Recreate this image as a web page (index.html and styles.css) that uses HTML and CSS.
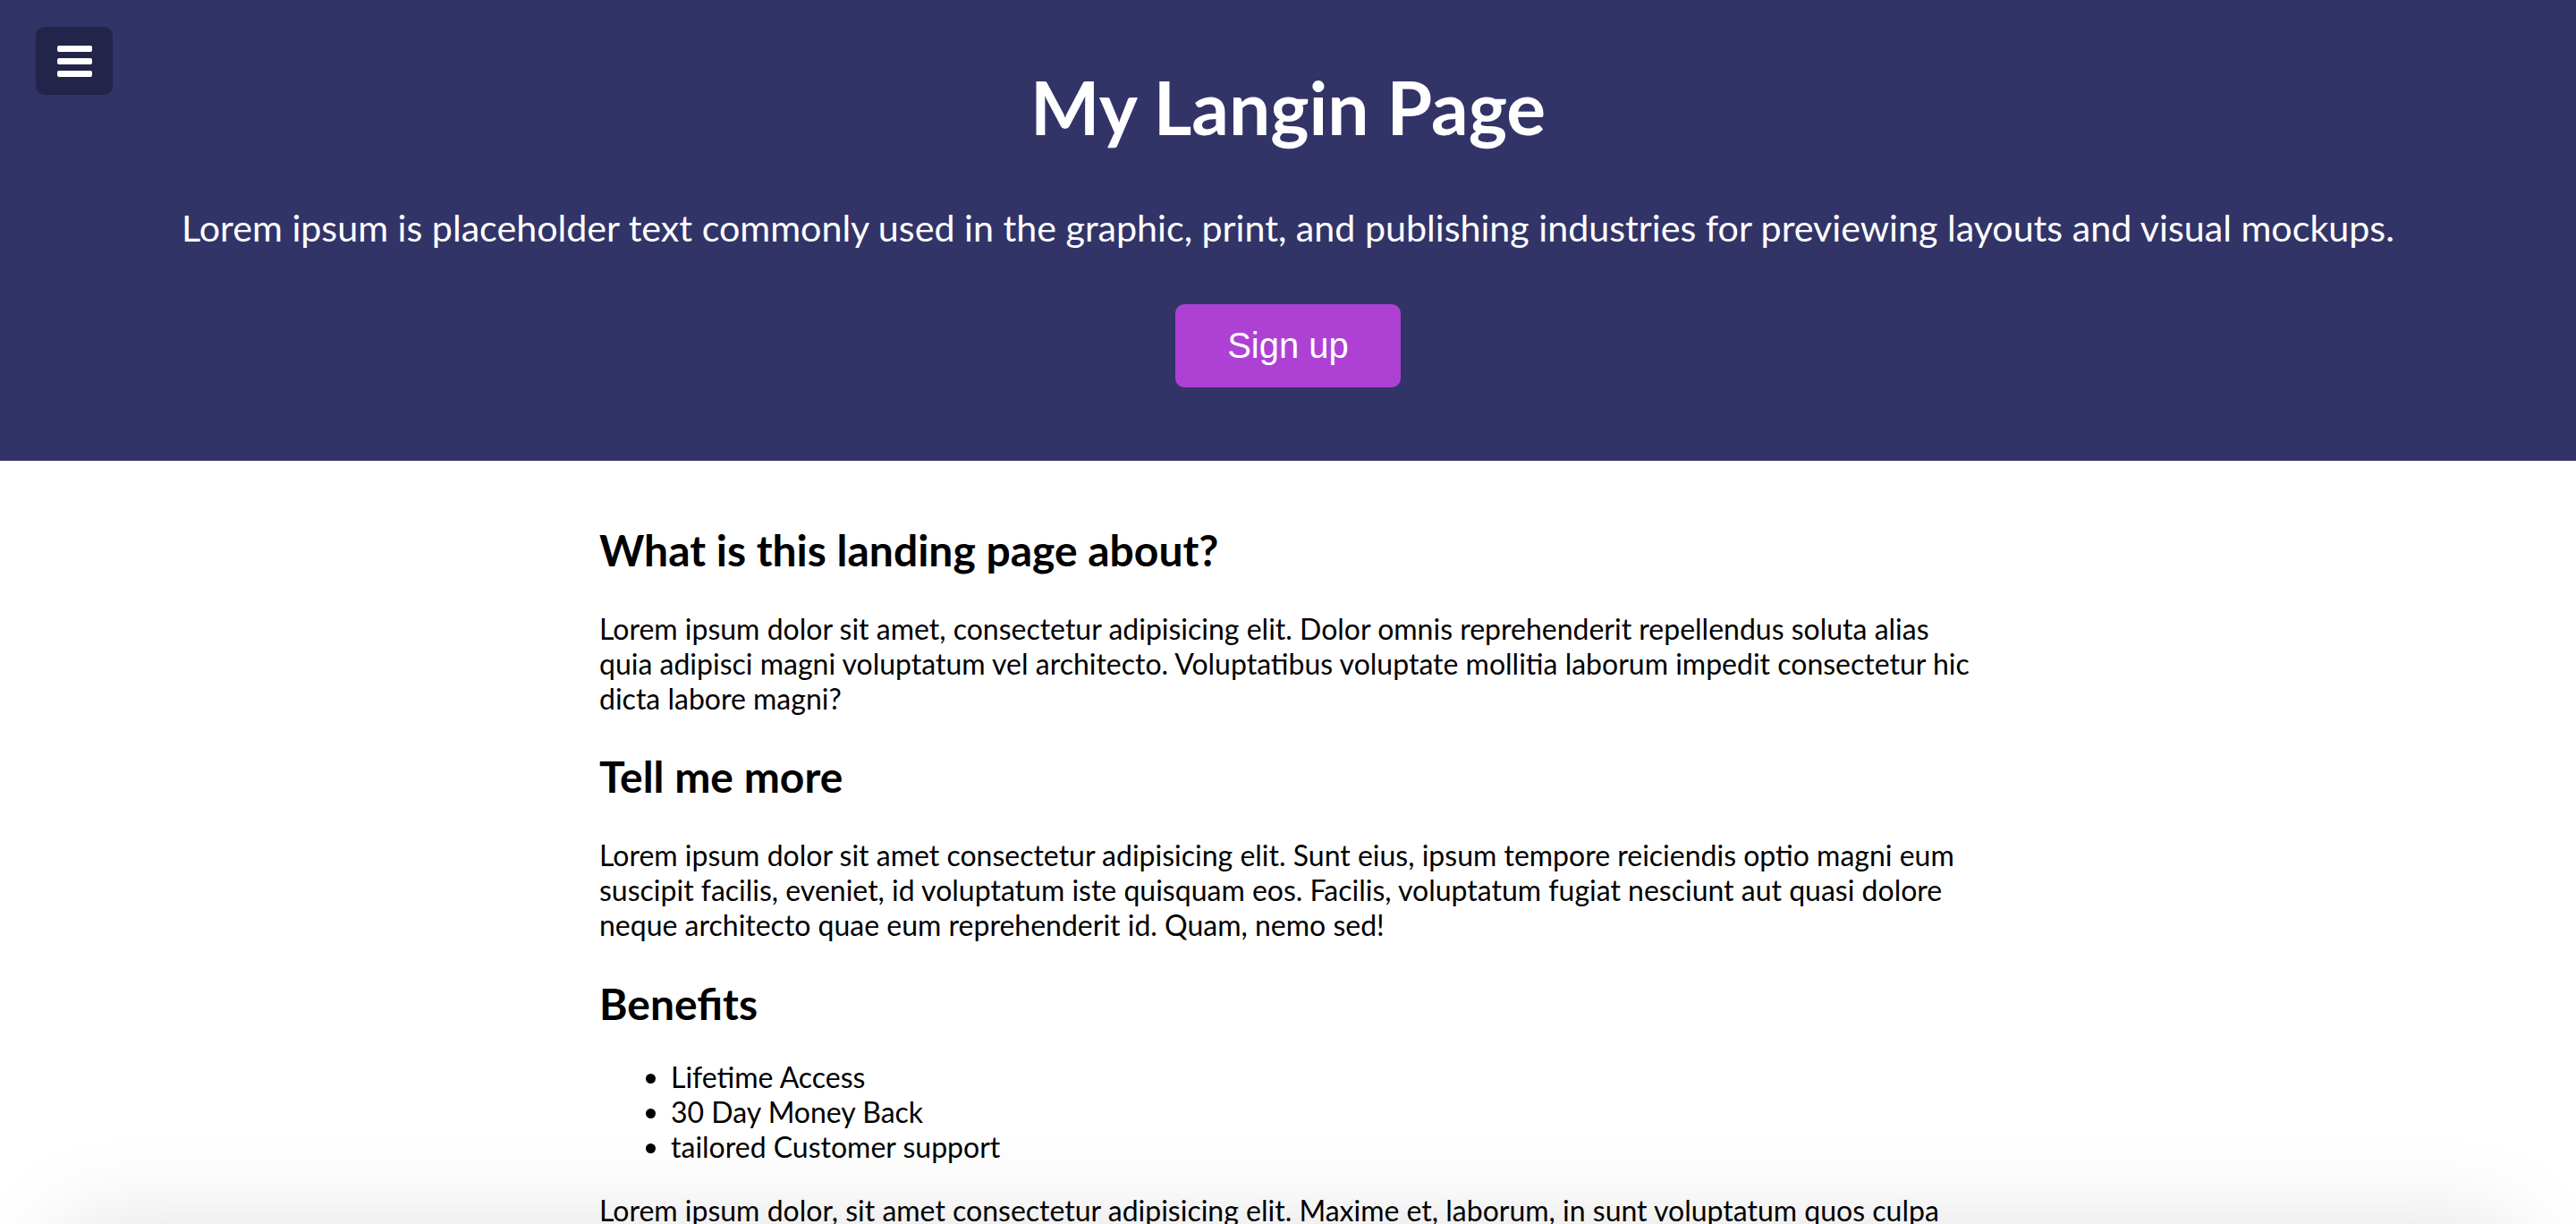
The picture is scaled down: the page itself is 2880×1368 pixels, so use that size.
FILE: index.html
```html
<!DOCTYPE html>
<html lang="en">
<head>
<meta charset="utf-8">
<title>My Langin Page</title>
<link rel="stylesheet" href="styles.css">
</head>
<body>
<header class="hero">
  <button class="menu-btn" aria-label="Menu">
    <span class="menu-line"></span>
    <span class="menu-line"></span>
    <span class="menu-line"></span>
  </button>
  <h1 class="hero-title">My Langin Page</h1>
  <p class="hero-text">Lorem ipsum is placeholder text commonly used in the graphic, print, and publishing industries for previewing layouts and visual mockups.</p>
  <a class="signup-btn" href="#">Sign up</a>
</header>
<main class="content">
  <h2 class="section-title">What is this landing page about?</h2>
  <p class="section-text">Lorem ipsum dolor sit amet, consectetur adipisicing elit. Dolor omnis reprehenderit repellendus soluta alias quia adipisci magni voluptatum vel architecto. Voluptatibus voluptate mollitia laborum impedit consectetur hic dicta labore magni?</p>
  <h2 class="section-title">Tell me more</h2>
  <p class="section-text">Lorem ipsum dolor sit amet consectetur adipisicing elit. Sunt eius, ipsum tempore reiciendis optio magni eum suscipit facilis, eveniet, id voluptatum iste quisquam eos. Facilis, voluptatum fugiat nesciunt aut quasi dolore neque architecto quae eum reprehenderit id. Quam, nemo sed!</p>
  <h2 class="section-title section-title--list">Benefits</h2>
  <ul class="benefits">
    <li>Lifetime Access</li>
    <li>30 Day Money Back</li>
    <li>tailored Customer support</li>
  </ul>
  <p class="section-text">Lorem ipsum dolor, sit amet consectetur adipisicing elit. Maxime et, laborum, in sunt voluptatum quos culpa quisquam, quae dolorum officia excepturi eius ratione nemo sit delectus molestias reprehenderit aliquam.</p>
</main>
<div class="bottom-shade"></div>
</body>
</html>
```

FILE: styles.css
```css
html {
  margin: 0;
  padding: 0;
  background: #ffffff;
}

body {
  position: relative;
  margin: 0;
  padding: 0;
  font-family: "Lato", "Open Sans", sans-serif;
  font-size: 32px;
  color: #000000;
}

.hero {
  position: relative;
  background: #323468;
  color: #ffffff;
  text-align: center;
  padding: 70px 0 82px;
  display: flex;
  flex-direction: column;
  align-items: center;
}

.menu-btn {
  position: absolute;
  left: 40px;
  top: 30px;
  width: 86px;
  height: 76px;
  border: none;
  border-radius: 10px;
  background: #23244a;
  padding: 0;
  display: flex;
  flex-direction: column;
  align-items: center;
  justify-content: center;
  gap: 7px;
  cursor: pointer;
}

.menu-line {
  display: block;
  width: 39px;
  height: 7px;
  border-radius: 2px;
  background: #ffffff;
}

.hero-title {
  margin: 0;
  font-size: 82px;
  font-weight: 700;
  line-height: normal;
}

.hero-text {
  margin: 61px 0 0;
  font-size: 41.2px;
  line-height: normal;
}

.signup-btn {
  margin-top: 61px;
  display: inline-block;
  background: #ae41d4;
  color: #ffffff;
  text-decoration: none;
  font-family: "Liberation Sans", Arial, sans-serif;
  font-size: 40px;
  line-height: 46px;
  padding: 23px 58px 24px;
  border-radius: 10px;
}

.content {
  max-width: 1540px;
  margin: 0 auto;
  padding-top: 31px;
}

.section-title {
  font-size: 48px;
  font-weight: 700;
  margin: 0.83em 0;
}

.section-title--list {
  margin-bottom: 34px;
}

.section-text {
  margin: 32px 0;
}

.benefits {
  margin: 32px 0;
  padding-left: 80px;
}

.bottom-shade {
  position: absolute;
  left: 70px;
  right: 70px;
  top: 1372px;
  height: 200px;
  background: #ffffff;
  box-shadow: 0 0 110px rgba(0, 0, 0, 0.13);
  z-index: -1;
  pointer-events: none;
}
```
